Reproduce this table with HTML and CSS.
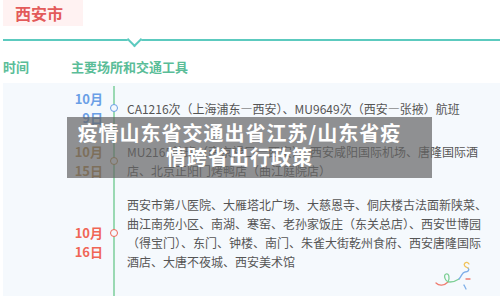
FILE: index.html
```html
<!DOCTYPE html>
<html lang="zh-CN">
<head>
<meta charset="utf-8">
<link rel="stylesheet" href="styles.css">
</head>
<body>
<div class="page">
  <div class="city">西安市</div>
  <div class="divider"></div>
  <div class="heads">
    <span class="h-time">时间</span>
    <span class="h-place">主要场所和交通工具</span>
  </div>
  <div class="panel">
    <div class="row">
      <div class="date blue">10月<br>9日</div>
      <div class="dot dot-blue"></div>
      <div class="text">CA1216次（上海浦东—西安）、MU9649次（西安—张掖）航班</div>
    </div>
    <div class="row">
      <div class="date brown">10月<br>15日</div>
      <div class="dot dot-brown"></div>
      <div class="text">MU2165航班（南京禄口—西安）、西安咸阳国际机场、唐隆国际酒店、北京正阳门烤鸭店（曲江庭院店）</div>
    </div>
    <div class="row">
      <div class="date red low">10月<br>16日</div>
      <div class="dot dot-red"></div>
      <div class="text">西安市第八医院、大雁塔北广场、大慈恩寺、侗庆楼古法面新陕菜、曲江南苑小区、南湖、寒窑、老孙家饭庄（东关总店）、西安世博园（得宝门）、东门、钟楼、南门、朱雀大街乾州食府、西安唐隆国际酒店、大唐不夜城、西安美术馆</div>
    </div>
  </div>
  <svg class="confetti" width="40" height="32" viewBox="0 0 40 32" fill="none" stroke-linecap="round" stroke-width="1.3">
    <path d="M3 23 C6 26 11 26 15 22" stroke="#ef7b6f"/>
    <path d="M15 22 C17 18 16 13 13 14 C10 15 12 22 17 22 C20 22 23 21 26 19" stroke="#7ccf94"/>
    <path d="M26 19 C29 16 29 12 32 12 C35 12 37 10 35 8" stroke="#7eaee8"/>
    <path d="M35 8 C32 7 30 5 32 3 C33 2 35 2 36 4" stroke="#f2c35a"/>
    <path d="M33 19 L37 19" stroke="#ef7b6f"/>
    <path d="M31 25 L33 29" stroke="#7eaee8"/>
  </svg>
  <div class="overlay">疫情山东省交通出省江苏/山东省疫<br>情跨省出行政策</div>
</div>
</body>
</html>
```
FILE: styles.css
```css
* { box-sizing: border-box; }
html, body {
  margin: 0;
  padding: 0;
  background: #ffffff;
  width: 500px;
  height: 296px;
  overflow: hidden;
}
body {
  font-family: "Noto Sans CJK SC", "Noto Sans", sans-serif;
}
.page {
  position: relative;
  padding-left: 3px;
  height: 296px;
}
.city {
  width: 80px;
  height: 26px;
  line-height: 26px;
  padding-left: 12px;
  background: #fff2f2;
  color: #e35a5a;
  font-size: 16px;
  font-weight: 700;
}
.divider {
  position: relative;
  margin-top: 13px;
  height: 2px;
  background: #5ccabf;
}
.divider::after {
  content: "";
  position: absolute;
  left: 126px;
  top: -5px;
  width: 9px;
  height: 9px;
  background: #ffffff;
  border-right: 2px solid #5ccabf;
  border-bottom: 2px solid #5ccabf;
  transform: rotate(45deg);
}
.heads {
  display: flex;
  align-items: center;
  height: 42px;
  padding-top: 8px;
  color: #5abd98;
  font-size: 13px;
  font-weight: 700;
}
.h-time { width: 68px; }
.panel {
  display: flex;
  flex-direction: column;
  gap: 15px;
  padding-top: 6px;
  height: 213px;
  background: #f5f9fd linear-gradient(#9ad9b3, #9ad9b3) no-repeat 110px 3px / 2px 100%;
}
.row {
  display: flex;
  align-items: center;
}
.date {
  width: 100px;
  flex: none;
  text-align: right;
  font-size: 13px;
  font-weight: 700;
  line-height: 19px;
}
.date.low { padding-top: 18px; }
.blue { color: #6a9fe6; }
.brown { color: #b98b47; }
.red { color: #f06656; }
.dot {
  flex: none;
  width: 8px;
  height: 8px;
  margin-left: 7px;
  margin-right: 9px;
  border-radius: 50%;
  background: #f5f9fd;
  border: 1.5px solid;
}
.dot-blue { border-color: #6a9fe6; }
.dot-brown { border-color: #c0924c; }
.dot-red { border-color: #f06656; }
.text {
  width: 362px;
  font-size: 12px;
  line-height: 19px;
  color: #555555;
}
.confetti {
  position: absolute;
  left: 433px;
  top: 260px;
}
.overlay {
  position: absolute;
  left: 67px;
  top: 117px;
  width: 365px;
  height: 61px;
  padding: 4px 20px 0 0;
  background: rgba(100, 100, 100, 0.7);
  color: #ffffff;
  font-size: 20px;
  font-weight: 700;
  line-height: 24px;
  letter-spacing: 1px;
  text-align: center;
}
```
